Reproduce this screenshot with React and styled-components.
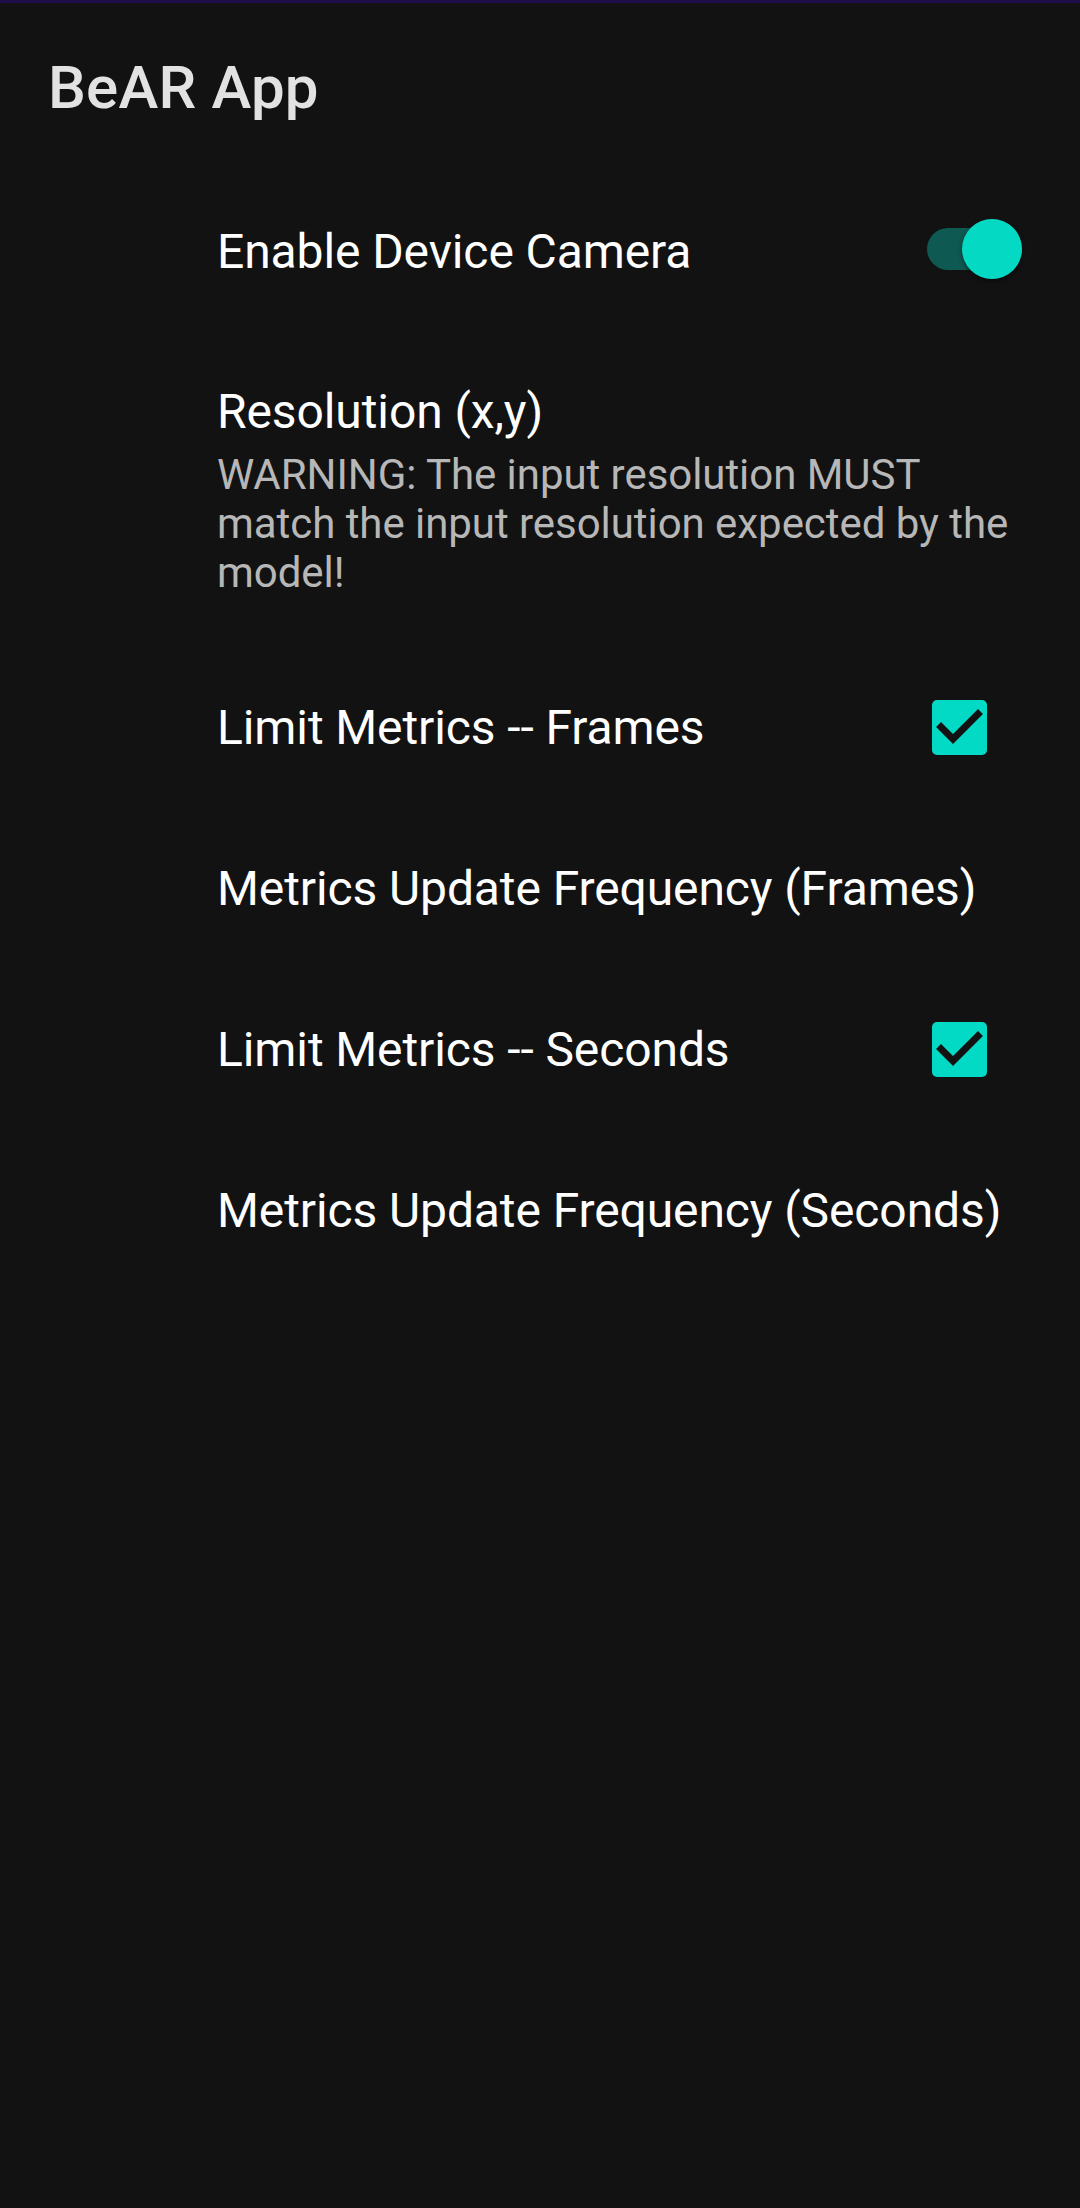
import React from "react";
import styled, { createGlobalStyle } from "styled-components";

const GlobalStyle = createGlobalStyle`
	html, body {
		margin: 0;
		padding: 0;
		background-color: #121212;
	}
	* {
		box-sizing: border-box;
	}
`;

const Screen = styled.div`
	width: 1080px;
	min-height: 2208px;
	background-color: #121212;
	font-family: Roboto, "Noto Sans", sans-serif;
	display: flex;
	flex-direction: column;
`;

const StatusEdge = styled.div`
	height: 3px;
	background-color: #1e0d4a;
`;

const Toolbar = styled.header`
	height: 168px;
	padding-left: 48px;
	display: flex;
	align-items: center;
`;

const Title = styled.h1`
	margin: 0;
	font-size: 60px;
	font-weight: 500;
	color: #e2e2e2;
	letter-spacing: 0.2px;
`;

const List = styled.div`
	display: flex;
	flex-direction: column;
`;

// Preference rows

const Row = styled.div`
	display: flex;
	align-items: center;
	padding: 50px 48px 50px 217px;
`;

const Texts = styled.div`
	flex: 1;
	display: flex;
	flex-direction: column;
	min-width: 0;
`;

const ItemTitle = styled.div`
	font-size: 48px;
	letter-spacing: -0.1px;
	line-height: ${(props) => (props.$tight ? "60px" : "61px")};
	color: #ffffff;
`;

const Summary = styled.div`
	margin-top: 8px;
	font-size: 42px;
	letter-spacing: -0.05px;
	line-height: 49px;
	color: #b7b7b7;
	max-width: 815px;
`;

// Controls

const Track = styled.div`
	width: 95px;
	height: 42px;
	margin: 0 10px 6px 0;
	border-radius: 21px;
	background-color: #0e5951;
	display: flex;
	align-items: center;
	justify-content: flex-end;
`;

const Thumb = styled.div`
	width: 60px;
	height: 60px;
	flex-shrink: 0;
	border-radius: 50%;
	background-color: #04d9c4;
	box-shadow: 0 2px 4px rgba(0, 0, 0, 0.45);
`;

const Box = styled.div`
	width: 55px;
	height: 55px;
	margin-right: 45px;
	border-radius: 5px;
	background-color: #03dac5;
	display: flex;
	align-items: center;
	justify-content: center;
	svg {
		display: block;
	}
`;

const Switch = () => (
	<Track>
		<Thumb />
	</Track>
);

const Check = () => (
	<Box>
		<svg width="55" height="55" viewBox="0 0 55 55">
			<polyline
				points="9,27 21,39 46,14"
				fill="none"
				stroke="#121212"
				strokeWidth="7"
				strokeLinecap="square"
			/>
		</svg>
	</Box>
);

const prefs = [
	{ id: 1, title: "Enable Device Camera", control: "switch" },
	{
		id: 2,
		title: "Resolution (x,y)",
		summary: "WARNING: The input resolution MUST match the input resolution expected by the model!",
	},
	{ id: 3, title: "Limit Metrics -- Frames", control: "check" },
	{ id: 4, title: "Metrics Update Frequency (Frames)" },
	{ id: 5, title: "Limit Metrics -- Seconds", control: "check" },
	{ id: 6, title: "Metrics Update Frequency (Seconds)" },
];

const App = () => {
	return (
		<Screen>
			<GlobalStyle />
			<StatusEdge />
			<Toolbar>
				<Title>BeAR App</Title>
			</Toolbar>
			<List>
				{prefs.map((p) => (
					<Row key={p.id}>
						<Texts>
							<ItemTitle $tight={!!p.summary}>{p.title}</ItemTitle>
							{p.summary && <Summary>{p.summary}</Summary>}
						</Texts>
						{p.control === "switch" && <Switch />}
						{p.control === "check" && <Check />}
					</Row>
				))}
			</List>
		</Screen>
	);
};

export default App;
